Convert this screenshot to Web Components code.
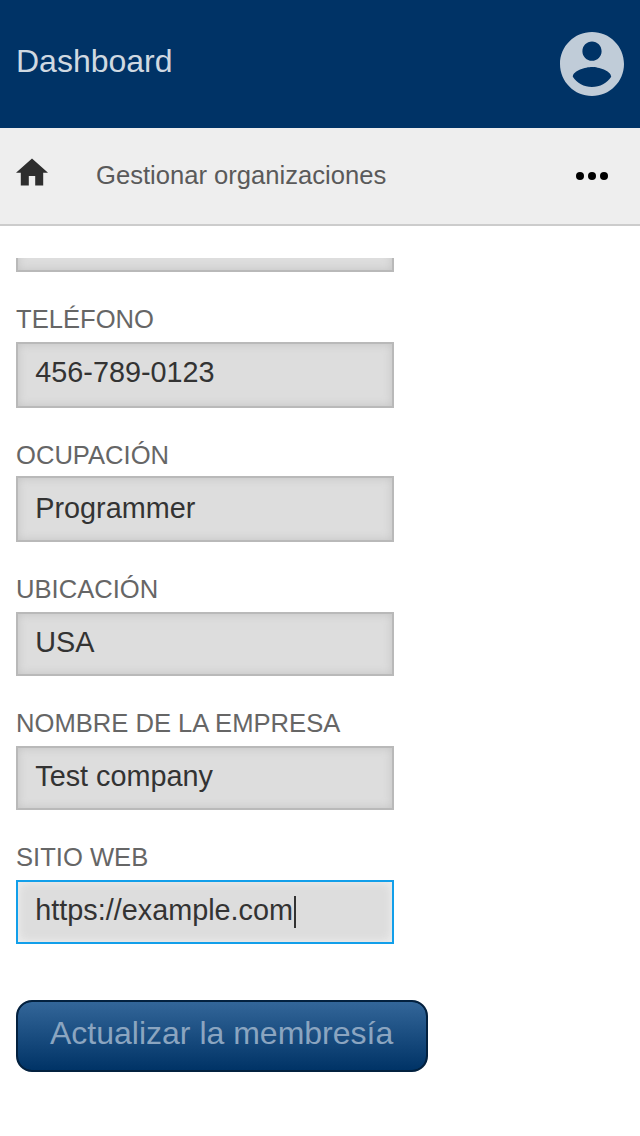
<!DOCTYPE html>
<html lang="es">
<head>
<meta charset="utf-8">
<title>Dashboard</title>
<style>
  body { margin: 0; background: #fff; font-family: "Liberation Sans", Arial, sans-serif; }
</style>
</head>
<body>
<membership-page></membership-page>
<script>
const define = (name, html) => {
  const template = document.createElement('template');
  template.innerHTML = html;
  customElements.define(name, class extends HTMLElement {
    constructor() {
      super();
      this.attachShadow({ mode: 'open' }).append(template.content.cloneNode(true));
    }
  });
};

define('app-header', `
  <style>
    :host { display: flex; justify-content: space-between; box-sizing: border-box; height: 128px;
      padding: 32px 16px 0; background: #003366; color: #d0d9e1; font-size: 32px; }
    .title { line-height: 36px; padding-top: 11px; }
    svg { width: 64px; height: 64px; fill: #c0ccd8; }
  </style>
  <div class="title"><slot></slot></div>
  <svg viewBox="2 2 20 20"><path d="M12 2C6.48 2 2 6.48 2 12s4.48 10 10 10 10-4.48 10-10S17.52 2 12 2zm0 3c1.66 0 3 1.34 3 3s-1.34 3-3 3-3-1.34-3-3 1.34-3 3-3zm0 14.2c-2.5 0-4.71-1.28-6-3.22.03-1.99 4-3.08 6-3.08 1.99 0 5.97 1.09 6 3.08-1.29 1.94-3.5 3.22-6 3.22z"/></svg>
`);

define('nav-bar', `
  <style>
    :host { display: flex; box-sizing: border-box; height: 98px; padding: 0 32px 0 16px;
      background: #eee; border-bottom: 2px solid #ccc; color: #5a5a5a; font-size: 25.6px; }
    .home { width: 32px; height: 28px; margin-top: 30px; fill: #2e2e2e; }
    .title { flex: 1; margin: 32px 0 0 48px; line-height: 30px; }
    .more { width: 32px; height: 8px; margin-top: 44px; fill: #000; }
  </style>
  <svg class="home" viewBox="2 2.75 20 17.5"><path d="M10 20v-6h4v6h5v-8h3L12 3 2 12h3v8z"/></svg>
  <div class="title"><slot></slot></div>
  <svg class="more" viewBox="0 0 32 8"><circle cx="4" cy="4" r="4"/><circle cx="16" cy="4" r="4"/><circle cx="28" cy="4" r="4"/></svg>
`);

define('form-field', `
  <style>
    :host { display: block; color: #666; }
    .label { font-size: 25.6px; line-height: 30px; margin-bottom: var(--gap, 8px); }
    .box { display: flex; box-sizing: border-box; width: 378px; height: var(--box-height, 64px);
      padding: var(--pad, 12px) 17.3px 0; border: 2px solid #b9b9b9; background: #ddd;
      box-shadow: inset 0 0 10px #c4c4c4; color: #333; font-size: 28.8px; line-height: 32px; }
    .caret { display: none; width: 2px; height: 32px; margin: 2px 0 0 1px; background: #333; }
    :host([focused]) .box { border-color: #129fea; box-shadow: inset 0 0 10px #f2f2f2; }
    :host([focused]) .caret { display: block; }
  </style>
  <div class="label"><slot name="label"></slot></div>
  <div class="box" role="textbox"><slot></slot><span class="caret"></span></div>
`);

define('primary-button', `
  <style>
    :host { display: flex; box-sizing: border-box; width: 412px; height: 72px;
      padding: 13px 0 0 32px; border: 2px solid #03213f; border-radius: 16px;
      background: linear-gradient(#336699, #003366) padding-box, #03213f border-box;
      color: #8ba5c0; font-size: 32px; line-height: 36px; white-space: nowrap; }
  </style>
  <slot></slot>
`);

define('membership-page', `
  <style>
    :host { display: flex; flex-direction: column; height: 1136px; overflow: hidden; }
    main { display: flex; flex-direction: column; justify-content: flex-end; gap: 32px;
      height: 814px; margin: 32px 16px 0; overflow: hidden; }
    form-field { flex: none; }
    primary-button { flex: none; margin-top: 24px; }
    .phone { --box-height: 66px; }
    .job { --box-height: 66px; --gap: 6px; --pad: 14px; }
  </style>
  <app-header>Dashboard</app-header>
  <nav-bar>Gestionar organizaciones</nav-bar>
  <main>
    <form-field></form-field>
    <form-field class="phone"><span slot="label">TELÉFONO</span>456-789-0123</form-field>
    <form-field class="job"><span slot="label">OCUPACIÓN</span>Programmer</form-field>
    <form-field><span slot="label">UBICACIÓN</span>USA</form-field>
    <form-field><span slot="label">NOMBRE DE LA EMPRESA</span>Test company</form-field>
    <form-field focused><span slot="label">SITIO WEB</span>https://example.com</form-field>
    <primary-button>Actualizar la membresía</primary-button>
  </main>
`);
</script>
</body>
</html>
